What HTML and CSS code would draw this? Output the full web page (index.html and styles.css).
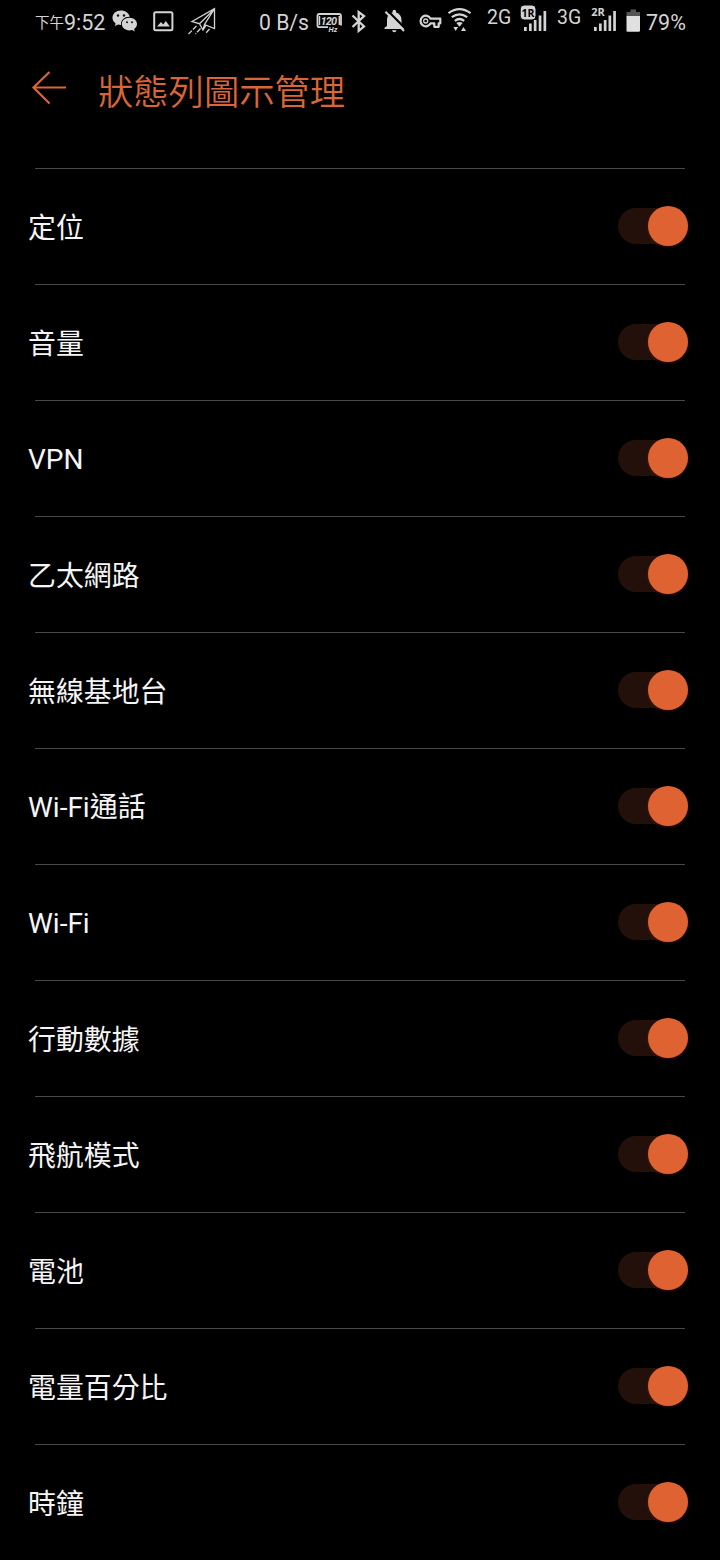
FILE: index.html
```
<!DOCTYPE html>
<html lang="zh-Hant">
<head>
<meta charset="utf-8">
<title>狀態列圖示管理</title>
<link rel="stylesheet" href="styles.css">
</head>
<body>
<div class="status">
  <div class="clock"><span class="ampm">下午</span><span>9:52</span></div>
  <svg width="40" height="44" viewBox="106 0 40 44"><path fill="#d4d4d4" d="M121 10.500c-5 0-8.500 3.200-8.500 7.200 0 2.400 1.200 4.400 3.200 5.700l-.8 2.700 3.200-1.500 2.900.4c-.4-5 3.600-8.300 8.700-8.200-.7-3.700-4.300-6.300-8.700-6.300z"/><path fill="#d4d4d4" d="M129.500 17.800c-4.400 0-7.700 2.800-7.700 6.300 0 3.600 3.300 6.300 7.700 6.300l2.600-.4 2.700 1.500-.7-2.400c1.800-1.200 2.900-3 2.900-5 0-3.500-3.300-6.300-7.500-6.300z"/><g fill="#111"><circle cx="118" cy="15.500" r="1.200"/><circle cx="124" cy="15.500" r="1.200"/><circle cx="127" cy="22.300" r="1"/><circle cx="132" cy="22.300" r="1"/></g></svg>
  <svg width="40" height="44" viewBox="146 0 40 44"><rect x="154.200" y="12.200" width="18.200" height="18" rx="1.500" fill="none" stroke="#d4d4d4" stroke-width="2"/><path fill="#d4d4d4" d="M157 26.500l4-4.500 2.200 2.400 2.600-3.400 4 5.500z"/></svg>
  <svg width="74" height="44" viewBox="186 0 74 44"><g fill="none" stroke="#d4d4d4" stroke-width="1.300"><path d="M192 21.500L214.500 8.700V28.500L204.500 24.500 214 9.500 199.500 23.700zM199.500 23.700l3.500 6.300 3-4.500M204.500 24.500l-1.500 5.500"/><path stroke-dasharray="5 1.500" d="M196.500 26l-8 8M200.500 28.500l-5 5.500M209.500 29l-4 4.500"/></g></svg>
  <span class="speed">0 B/s</span>
  <svg width="34" height="44" viewBox="313 0 34 44"><path fill="none" stroke="#d4d4d4" stroke-width="1.800" d="M328 27.200H319.500q-2 0-2-2V16q0-2 2-2H339q2 0 2 2v9.500"/><path stroke="#d4d4d4" stroke-width="1.400" d="M319.500 16v9M339.300 16v9"/><text x="320.500" y="24.500" textLength="16.500" class="hz">120</text><text x="328.500" y="31.500" class="hz-unit">Hz</text></svg>
  <svg width="32" height="44" viewBox="347 0 32 44"><path fill="none" stroke="#d4d4d4" stroke-width="2.300" d="M352.500 15.500l11.500 11-5.300 4.300V12l5.300 4-11.500 11"/></svg>
  <svg width="36" height="44" viewBox="379 0 36 44"><path fill="#d4d4d4" d="M387 26v-6c0-4 2-6.600 5.500-7.500v-1q0-1.800 1.800-1.800t1.800 1.800v1c3.500 1 5.400 3.600 5.400 7.500v5.500l2.500 2.500v1H384.500v-1.300zM392 30.200h4.600q-.4 2-2.300 2t-2.300-2z"/><path stroke="#000" stroke-width="2.200" d="M387.500 10.500l18.500 18.700"/><path stroke="#d4d4d4" stroke-width="2" d="M385.500 11.700L404 31"/></svg>
  <svg width="30" height="44" viewBox="415 0 30 44"><path fill="none" stroke="#d4d4d4" stroke-width="2.200" stroke-linejoin="round" d="M430.600 18.700H440.300v4.600h-1.600v3.500h-4.400v-3.500H430.600a5.300 5.300 0 1 1 0-4.600z"/><circle cx="425.700" cy="21" r="2" fill="none" stroke="#d4d4d4" stroke-width="1.300"/></svg>
  <svg width="40" height="44" viewBox="445 0 40 44"><g fill="none" stroke="#d4d4d4" stroke-width="2.200"><path d="M448.500 13.200q11-8 22 0M451.800 17.200q7.700-5.800 15.400 0M454.800 20.800q4.700-3.600 9.400 0"/></g><path fill="#d4d4d4" d="M456.300 23q3.200-2.200 6.400 0l-3.200 3.700zM453.300 27h4.800l-2.400 4zM461 31h5l-2.500-4z"/></svg>
  <span class="net first">2G</span>
  <svg width="40" height="44" viewBox="516 0 40 44"><path fill="#d4d4d4" d="M524 27h2.700v4H524zM529 23.500h2.700V31H529zM533.800 20h2.700v11h-2.700zM538.700 15.500h2.700V31h-2.700zM543.500 11h2.700v20h-2.700z"/><rect x="520.200" y="5" width="15.800" height="15" rx="4" fill="#d4d4d4" stroke="#000"/><text x="521.500" y="16.600" textLength="13" lengthAdjust="spacingAndGlyphs" class="sim dark">1R</text></svg>
  <span class="net second">3G</span>
  <svg width="36" height="44" viewBox="588 0 36 44"><path fill="#d4d4d4" d="M594 27h2.700v4H594zM599 23.500h2.700V31H599zM603.800 20h2.700v11h-2.700zM608.500 15.500h2.700V31h-2.700zM613.200 11h2.700v20h-2.700z"/><text x="591.300" y="16" class="sim">2R</text></svg>
  <svg width="22" height="44" viewBox="624 0 22 44"><path fill="#555" d="M630.500 9.500h5.500V12h4v5h-13.500v-5h4z"/><path fill="#e0e0e0" d="M626.500 16H640v14.500q0 1.300-1.300 1.300h-10.900q-1.300 0-1.300-1.300z"/></svg>
  <span class="percent">79%</span>
</div>
<header class="header">
  <svg width="36" height="36" viewBox="31 70 36 36"><path fill="none" stroke="#d96538" stroke-width="2.200" d="M49.500 72L33.500 87.500 49.500 103.500M33.500 87.500H66"/></svg>
  <h1>狀態列圖示管理</h1>
</header>
<main class="list">
  <div class="row han"><span>定位</span><i class="switch"></i></div>
  <div class="row han"><span>音量</span><i class="switch"></i></div>
  <div class="row"><span>VPN</span><i class="switch"></i></div>
  <div class="row han"><span>乙太網路</span><i class="switch"></i></div>
  <div class="row han"><span>無線基地台</span><i class="switch"></i></div>
  <div class="row"><span>Wi-Fi通話</span><i class="switch"></i></div>
  <div class="row"><span>Wi-Fi</span><i class="switch"></i></div>
  <div class="row han"><span>行動數據</span><i class="switch"></i></div>
  <div class="row han"><span>飛航模式</span><i class="switch"></i></div>
  <div class="row han"><span>電池</span><i class="switch"></i></div>
  <div class="row han"><span>電量百分比</span><i class="switch"></i></div>
  <div class="row han"><span>時鐘</span><i class="switch"></i></div>
</main>
</body>
</html>
```
FILE: styles.css
```
* { box-sizing: border-box; }
html { background: #000; }
body {
  margin: 0;
  width: 720px;
  height: 1560px;
  overflow: hidden;
  background: #000;
  color: #f5f5f5;
  font-family: Roboto, "Noto Sans CJK TC", sans-serif;
}
svg { display: block; flex: none; }

.status {
  display: flex;
  height: 44px;
  padding-left: 35px;
  font-size: 21.5px;
  line-height: 45px;
  color: #d4d4d4;
  white-space: nowrap;
}
.clock { display: flex; width: 71px; }
.ampm { width: 29px; font-size: 14.5px; line-height: 48px; }
.speed { width: 54px; margin-left: -1px; font-size: 21.2px; }
.net { width: 31px; font-size: 19.5px; line-height: 36px; }
.net.first { margin-left: 2px; width: 29px; }
.net.second { margin-left: 1px; }
.hz { font: italic bold 11px Roboto, sans-serif; fill: #d4d4d4; }
.hz-unit { font: italic bold 7.5px Roboto, sans-serif; fill: #d4d4d4; }
.sim { font: bold 11px "Open Sans", "Noto Sans", sans-serif; fill: #d4d4d4; }
.sim.dark { fill: #000; }

.header {
  display: flex;
  align-items: center;
  gap: 31px;
  height: 88px;
  padding-left: 31px;
}
.header h1 {
  margin: 10px 0 0;
  font-size: 35.3px;
  line-height: 48px;
  font-weight: 350;
  color: #d96538;
}

.list { padding-top: 36px; }
.row {
  display: flex;
  align-items: center;
  justify-content: space-between;
  height: 116px;
  padding: 0 32px 0 28px;
  font-size: 28px;
  background: linear-gradient(#484848, #484848) 35px 0 / 650px 1px no-repeat;
}
.row span { margin-top: 4px; line-height: 40px; }
.row.han { font-size: 27.9px; }
.row.han span { margin-top: 6px; }
.switch {
  display: flex;
  align-items: center;
  justify-content: flex-end;
  width: 70px;
  height: 36px;
  border-radius: 18px;
  background: #24100a;
}
.switch::after {
  content: "";
  width: 40px;
  height: 40px;
  flex: none;
  border-radius: 50%;
  background: #df6232;
  box-shadow: 0 1px 3px rgba(110, 40, 15, 0.5);
}
```
